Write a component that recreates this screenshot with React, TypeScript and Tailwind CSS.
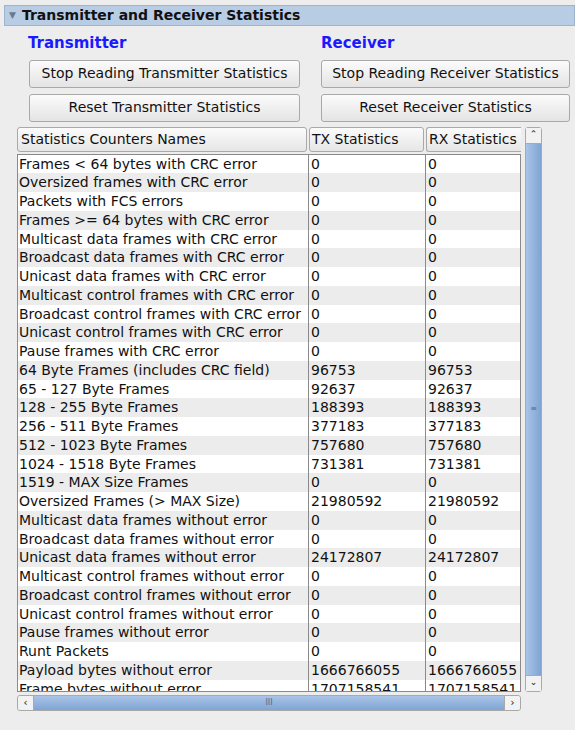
const rows: [string, string][] = [
  ["Frames < 64 bytes with CRC error", "0"],
  ["Oversized frames with CRC error", "0"],
  ["Packets with FCS errors", "0"],
  ["Frames >= 64 bytes with CRC error", "0"],
  ["Multicast data frames with CRC error", "0"],
  ["Broadcast data frames with CRC error", "0"],
  ["Unicast data frames with CRC error", "0"],
  ["Multicast control frames with CRC error", "0"],
  ["Broadcast control frames with CRC error", "0"],
  ["Unicast control frames with CRC error", "0"],
  ["Pause frames with CRC error", "0"],
  ["64 Byte Frames (includes CRC field)", "96753"],
  ["65 - 127 Byte Frames", "92637"],
  ["128 - 255 Byte Frames", "188393"],
  ["256 - 511 Byte Frames", "377183"],
  ["512 - 1023 Byte Frames", "757680"],
  ["1024 - 1518 Byte Frames", "731381"],
  ["1519 - MAX Size Frames", "0"],
  ["Oversized Frames (> MAX Size)", "21980592"],
  ["Multicast data frames without error", "0"],
  ["Broadcast data frames without error", "0"],
  ["Unicast data frames without error", "24172807"],
  ["Multicast control frames without error", "0"],
  ["Broadcast control frames without error", "0"],
  ["Unicast control frames without error", "0"],
  ["Pause frames without error", "0"],
  ["Runt Packets", "0"],
  ["Payload bytes without error", "1666766055"],
  ["Frame bytes without error", "1707158541"],
];

const btn =
  "h-[28px] rounded-[3px] border border-[#a9a9a9] bg-gradient-to-b from-[#fbfbfb] to-[#e4e4e4] text-[14px] text-[#111] whitespace-nowrap font-[DejaVu_Sans,sans-serif]";

export default function App() {
  return (
    <div className="w-[575px] h-[730px] bg-[#ededed] overflow-hidden font-[DejaVu_Sans,sans-serif] text-[#111]">
      <div className="mt-[5px] ml-[4px] h-[21px] bg-[#b8cce4] border border-[#9db3cf] flex items-center gap-[6px] pl-[4px]">
        <span className="text-[9px] text-[#6a7a8c]">▼</span>
        <span className="text-[14px] font-bold">Transmitter and Receiver Statistics</span>
      </div>
      <div className="flex pl-[28px] pt-[6px]">
        <div className="w-[293px] text-[15px] font-bold text-[#1a1aff]">Transmitter</div>
        <div className="text-[15px] font-bold text-[#1a1aff]">Receiver</div>
      </div>
      <div className="grid grid-cols-[271px_249px] gap-x-[21px] gap-y-[6px] pl-[29px] pt-[5px]">
        <button className={btn}>Stop Reading Transmitter Statistics</button>
        <button className={btn}>Stop Reading Receiver Statistics</button>
        <button className={btn}>Reset Transmitter Statistics</button>
        <button className={btn}>Reset Receiver Statistics</button>
      </div>
      <div className="flex pl-[17px] pt-[5px] gap-[4px]">
        <div className="w-[504px] flex flex-col">
          <div className="flex h-[25px] gap-[2px] text-[14px]">
            <div className="w-[290px] border border-[#a9a9a9] rounded-[3px] bg-gradient-to-b from-[#fbfbfb] to-[#e6e6e6] px-[3px] flex items-center">Statistics Counters Names</div>
            <div className="w-[115px] border border-[#a9a9a9] rounded-[3px] bg-gradient-to-b from-[#fbfbfb] to-[#e6e6e6] px-[2px] flex items-center">TX Statistics</div>
            <div className="flex-1 border border-[#a9a9a9] rounded-l-[3px] border-r-0 bg-gradient-to-b from-[#fbfbfb] to-[#e6e6e6] px-[2px] flex items-center whitespace-nowrap overflow-hidden">RX Statistics</div>
          </div>
          <div className="mt-[2px] h-[538px] overflow-hidden border border-[#8a8a8a] bg-white text-[14px]">
            {rows.map(([n, v], i) => (
              <div key={n} className={`flex h-[18.75px] leading-[18.75px] ${i % 2 ? "bg-[#ececec]" : "bg-white"}`}>
                <div className="w-[291px] pl-[1px] border-r border-[#8a8a8a] whitespace-nowrap overflow-hidden text-ellipsis">{n}</div>
                <div className="w-[117px] pl-[2px] border-r border-[#8a8a8a] whitespace-nowrap overflow-hidden">{v}</div>
                <div className="flex-1 pl-[2px] whitespace-nowrap overflow-hidden">{v}</div>
              </div>
            ))}
          </div>
          <div className="mt-[3px] h-[16px] flex border border-[#a9a9a9] rounded-[3px] bg-[#d4d4d4] overflow-hidden">
            <div className="w-[16px] flex items-center justify-center bg-[#f2f2f2] border-r border-[#a9a9a9] text-[10px]">‹</div>
            <div className="w-[470px] bg-gradient-to-b from-[#a9c4e6] to-[#7fa4d4] flex items-center justify-center text-[8px] text-[#4a6a99]">III</div>
            <div className="flex-1" />
            <div className="w-[16px] flex items-center justify-center bg-[#f2f2f2] border-l border-[#a9a9a9] text-[10px]">›</div>
          </div>
        </div>
        <div className="w-[17px] h-[565px] flex flex-col border border-[#a9a9a9] rounded-[3px] bg-[#d4d4d4]">
          <div className="h-[16px] flex items-center justify-center bg-[#f2f2f2] border-b border-[#a9a9a9] text-[9px]">⌃</div>
          <div className="flex-1 bg-gradient-to-r from-[#a9c4e6] to-[#7fa4d4] flex items-center justify-center text-[8px] text-[#4a6a99]">≡</div>
          <div className="h-[16px] flex items-center justify-center bg-[#f2f2f2] border-t border-[#a9a9a9] text-[9px]">⌄</div>
        </div>
      </div>
    </div>
  );
}
